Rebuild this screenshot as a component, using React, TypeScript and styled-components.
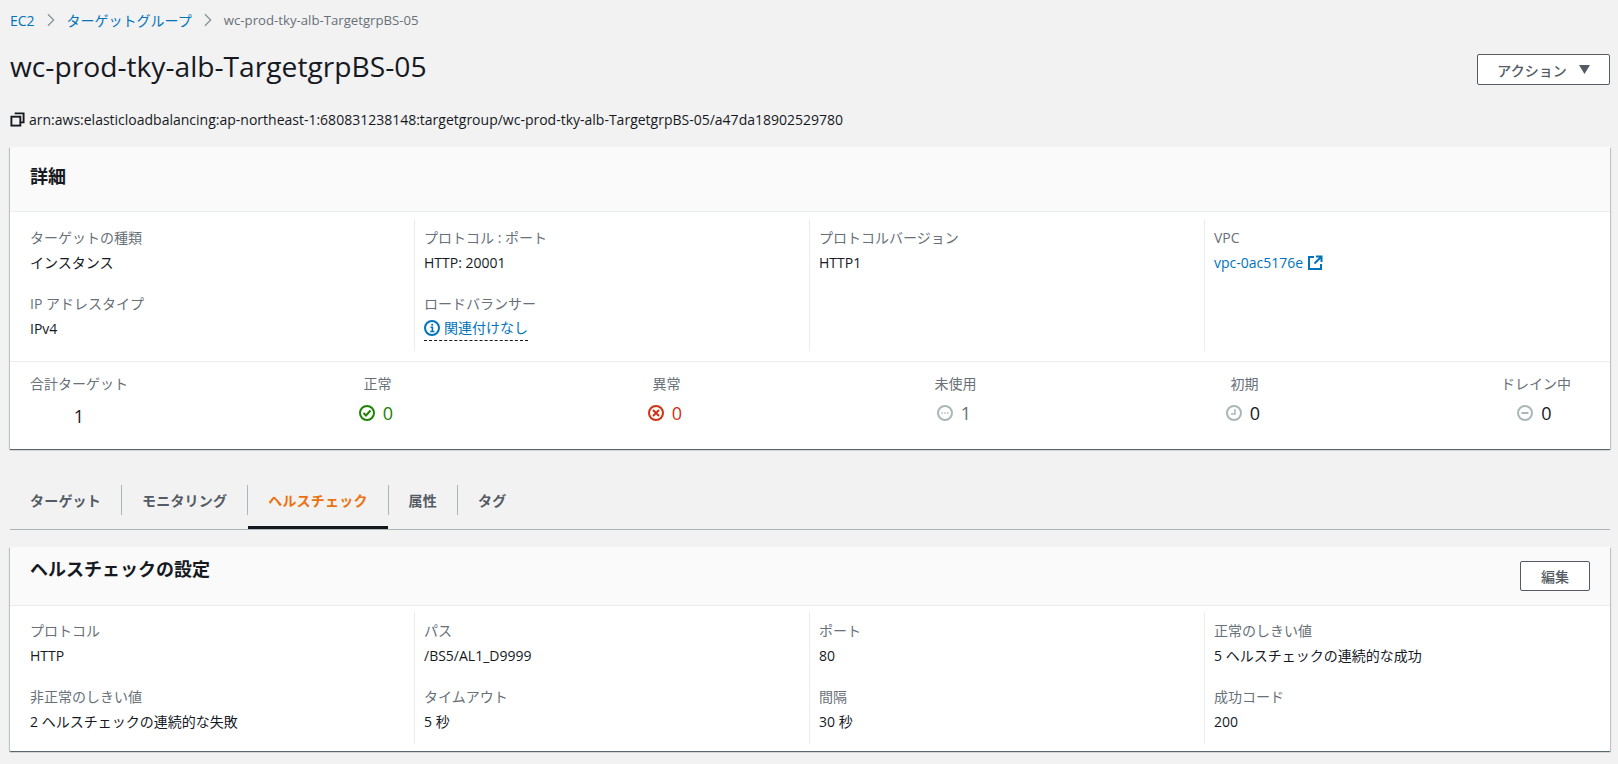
import React from "react";
import styled, { createGlobalStyle } from "styled-components";

const GlobalStyle = createGlobalStyle`
  html, body { margin: 0; padding: 0; background: #f2f2f2; }
  body {
    font-family: "Open Sans", "Noto Sans CJK JP", sans-serif;
    font-size: 14px;
    color: #16191f;
  }
`;

const Page = styled.div`
  width: 1618px;
  height: 764px;
  box-sizing: border-box;
  padding: 0 8px 0 10px;
  overflow: hidden;
`;

const Breadcrumbs = styled.nav`
  display: flex;
  align-items: center;
  height: 20px;
  margin-top: 10px;
  gap: 9px;
`;

const Crumb = styled.a`
  color: #0073bb;
  font-size: 14px;
`;

const CurrentCrumb = styled.span`
  color: #687078;
  font-size: 13.2px;
`;

const HeaderRow = styled.div`
  display: flex;
  justify-content: space-between;
  align-items: flex-start;
  margin-top: 17px;
`;

const Title = styled.h1`
  margin: 0;
  font-size: 28.2px;
  font-weight: 400;
  line-height: 38px;
`;

const Button = styled.button`
  box-sizing: border-box;
  display: flex;
  align-items: center;
  justify-content: center;
  gap: 12px;
  padding: 0;
  background: #fff;
  border: 1px solid #545b64;
  border-radius: 2px;
  color: #545b64;
  font-family: inherit;
  font-size: 14px;
  font-weight: 500;
`;

const ActionButton = styled(Button)`
  width: 133px;
  height: 31px;
  margin-top: 7px;
`;

const EditButton = styled(Button)`
  width: 70px;
  height: 30px;
  margin-top: 5px;
`;

const Arn = styled.div`
  display: flex;
  align-items: center;
  gap: 4px;
  margin-top: 24px;
  height: 20px;
  font-size: 14px;
`;

const Card = styled.section`
  background: #fff;
  box-shadow: 0 1px 1px 0 rgba(0, 28, 36, 0.5), 1px 1px 1px 0 rgba(0, 28, 36, 0.15),
    -1px 1px 1px 0 rgba(0, 28, 36, 0.15);
`;

const DetailsCard = styled(Card)`
  margin-top: 18px;
`;

const HealthCard = styled(Card)`
  margin-top: 17px;
`;

const CardHeader = styled.header<{ $h: number; $top: number }>`
  box-sizing: border-box;
  display: flex;
  justify-content: space-between;
  align-items: flex-start;
  height: ${(p) => p.$h}px;
  padding: ${(p) => p.$top}px 20px 0;
  background: #fafafa;
  border-bottom: 1px solid #eaeded;
`;

const CardTitle = styled.h2`
  margin: 0;
  font-size: 18px;
  font-weight: 700;
  line-height: 26px;
`;

const ColumnGrid = styled.div`
  display: grid;
  grid-template-columns: 384px 395px 395px 1fr;
  padding: 7px 20px 10px;
`;

const HealthGrid = styled(ColumnGrid)`
  padding: 6px 20px 7px;
`;

const Column = styled.div`
  padding: 0 10px 0 0;
  &:not(:first-child) {
    padding-left: 9px;
    border-left: 1px solid #eaeded;
  }
`;

const Field = styled.div`
  box-sizing: content-box;
  height: 50px;
  padding: 6px 0 10px;
`;

const Label = styled.div`
  color: #687078;
  font-size: 14px;
  line-height: 25px;
`;

const Value = styled.div`
  font-size: 14px;
  line-height: 25px;
  color: #16191f;
`;

const Link = styled.a`
  display: inline-flex;
  align-items: center;
  gap: 4px;
  color: #0073bb;
`;

const InfoLink = styled(Link)`
  border-bottom: 1px dashed #16191f;
  line-height: 24px;
`;

const Summary = styled.div`
  display: grid;
  grid-template-columns: 203px repeat(4, 289px) 1fr;
  height: 88px;
  box-sizing: border-box;
  padding: 9px 39px 0 20px;
  border-top: 1px solid #eaeded;
`;

const Stat = styled.div`
  text-align: center;
  &:first-child {
    justify-self: start;
  }
  &:last-child {
    justify-self: end;
  }
`;

const StatValue = styled.div<{ $color: string }>`
  display: flex;
  align-items: center;
  justify-content: center;
  gap: 8px;
  margin-top: 1px;
  padding-right: 3px;
  font-size: 18px;
  line-height: 32px;
  color: ${(p) => p.$color};
`;

const TotalValue = styled(StatValue)`
  margin-top: 4px;
  padding-right: 0;
`;

const Tabs = styled.div`
  display: flex;
  margin-top: 20px;
  height: 61px;
  box-sizing: border-box;
  padding-top: 16px;
  border-bottom: 1px solid #aab7b8;
`;

const Tab = styled.div<{ $active?: boolean }>`
  box-sizing: border-box;
  height: 44px;
  padding: 0 20px 14px;
  display: flex;
  align-items: center;
  font-weight: 700;
  font-size: 14px;
  letter-spacing: 0.2px;
  color: ${(p) => (p.$active ? "#ec7211" : "#545b64")};
  position: relative;
  ${(p) => p.$active && "box-shadow: inset 0 -3px 0 #16191f;"}
  &:not(:first-child) {
    margin-left: 1px;
  }
  &:not(:first-child)::before {
    content: "";
    position: absolute;
    left: -1px;
    top: 0;
    height: 30px;
    width: 1px;
    background: #aab7b8;
  }
`;

const Chevron = () => (
  <svg width="14" height="14" viewBox="0 0 16 16" fill="none" stroke="#879596" strokeWidth="1.5">
    <path d="M4.5 1.5 11 8l-6.5 6.5" />
  </svg>
);

const CopyIcon = () => (
  <svg width="15" height="15" viewBox="0 0 16 16" fill="none" stroke="#16191f" strokeWidth="2">
    <path d="M5 1.5h9.5V11H11" />
    <rect x="1.5" y="5" width="9.5" height="9.5" />
  </svg>
);

const Caret = () => (
  <svg width="11" height="9" viewBox="0 0 11 9" fill="#545b64">
    <path d="M0 0h11L5.5 9z" />
  </svg>
);

const External = () => (
  <svg width="16" height="16" viewBox="0 0 16 16" fill="none" stroke="#0073bb" strokeWidth="2">
    <path d="M7 2H2v12h12V9" />
    <path d="M9 1.5h5.5V7M14 2 7.5 8.5" />
  </svg>
);

const Info = () => (
  <svg width="16" height="16" viewBox="0 0 16 16" fill="none">
    <circle cx="8" cy="8" r="7" stroke="#0073bb" strokeWidth="2" />
    <path d="M6.5 7.2H8.4V11.5M6.2 11.5h4.2" stroke="#0073bb" strokeWidth="1.6" />
    <rect x="7.3" y="3.8" width="1.8" height="1.8" fill="#0073bb" />
  </svg>
);

type StatusKind = "ok" | "error" | "unused" | "initial" | "draining";

const StatusIcon = ({ kind, color }: { kind: StatusKind; color: string }) => (
  <svg width="16" height="16" viewBox="0 0 16 16" fill="none" stroke={color} strokeWidth="2">
    <circle cx="8" cy="8" r="7" />
    {kind === "ok" && <path d="M4.5 8 7 10.5 11.5 5.5" />}
    {kind === "error" && <path d="M5 5l6 6M11 5l-6 6" />}
    {kind === "unused" && <path d="M4.5 8h1.4M7.3 8h1.4M10.1 8h1.4" strokeWidth="1.4" />}
    {kind === "initial" && <path d="M9 4v5H5" strokeWidth="1.5" />}
    {kind === "draining" && <path d="M4.5 8h7" />}
  </svg>
);

const stats: { label: string; value: string; kind: StatusKind; icon: string; text: string }[] = [
  { label: "正常", value: "0", kind: "ok", icon: "#1d8102", text: "#1d8102" },
  { label: "異常", value: "0", kind: "error", icon: "#d13212", text: "#d13212" },
  { label: "未使用", value: "1", kind: "unused", icon: "#aab7b8", text: "#687078" },
  { label: "初期", value: "0", kind: "initial", icon: "#aab7b8", text: "#16191f" },
  { label: "ドレイン中", value: "0", kind: "draining", icon: "#aab7b8", text: "#16191f" },
];

const health = [
  [["プロトコル", "HTTP"], ["非正常のしきい値", "2 ヘルスチェックの連続的な失敗"]],
  [["パス", "/BS5/AL1_D9999"], ["タイムアウト", "5 秒"]],
  [["ポート", "80"], ["間隔", "30 秒"]],
  [["正常のしきい値", "5 ヘルスチェックの連続的な成功"], ["成功コード", "200"]],
];

export default function App() {
  return (
    <Page>
      <GlobalStyle />
      <Breadcrumbs>
        <Crumb>EC2</Crumb>
        <Chevron />
        <Crumb>ターゲットグループ</Crumb>
        <Chevron />
        <CurrentCrumb>wc-prod-tky-alb-TargetgrpBS-05</CurrentCrumb>
      </Breadcrumbs>

      <HeaderRow>
        <Title>wc-prod-tky-alb-TargetgrpBS-05</Title>
        <ActionButton>
          アクション <Caret />
        </ActionButton>
      </HeaderRow>

      <Arn>
        <CopyIcon />
        arn:aws:elasticloadbalancing:ap-northeast-1:680831238148:targetgroup/wc-prod-tky-alb-TargetgrpBS-05/a47da18902529780
      </Arn>

      <DetailsCard>
        <CardHeader $h={65} $top={16}>
          <CardTitle>詳細</CardTitle>
        </CardHeader>
        <ColumnGrid>
          <Column>
            <Field>
              <Label>ターゲットの種類</Label>
              <Value>インスタンス</Value>
            </Field>
            <Field>
              <Label>IP アドレスタイプ</Label>
              <Value>IPv4</Value>
            </Field>
          </Column>
          <Column>
            <Field>
              <Label>プロトコル : ポート</Label>
              <Value>HTTP: 20001</Value>
            </Field>
            <Field>
              <Label>ロードバランサー</Label>
              <Value>
                <InfoLink>
                  <Info />
                  関連付けなし
                </InfoLink>
              </Value>
            </Field>
          </Column>
          <Column>
            <Field>
              <Label>プロトコルバージョン</Label>
              <Value>HTTP1</Value>
            </Field>
          </Column>
          <Column>
            <Field>
              <Label>VPC</Label>
              <Value>
                <Link>
                  vpc-0ac5176e <External />
                </Link>
              </Value>
            </Field>
          </Column>
        </ColumnGrid>
        <Summary>
          <Stat>
            <Label>合計ターゲット</Label>
            <TotalValue $color="#16191f">1</TotalValue>
          </Stat>
          {stats.map((s) => (
            <Stat key={s.label}>
              <Label>{s.label}</Label>
              <StatValue $color={s.text}>
                <StatusIcon kind={s.kind} color={s.icon} />
                {s.value}
              </StatValue>
            </Stat>
          ))}
        </Summary>
      </DetailsCard>

      <Tabs>
        <Tab>ターゲット</Tab>
        <Tab>モニタリング</Tab>
        <Tab $active>ヘルスチェック</Tab>
        <Tab>属性</Tab>
        <Tab>タグ</Tab>
      </Tabs>

      <HealthCard>
        <CardHeader $h={59} $top={9}>
          <CardTitle>ヘルスチェックの設定</CardTitle>
          <EditButton>編集</EditButton>
        </CardHeader>
        <HealthGrid>
          {health.map((col, i) => (
            <Column key={i}>
              {col.map(([label, value]) => (
                <Field key={label}>
                  <Label>{label}</Label>
                  <Value>{value}</Value>
                </Field>
              ))}
            </Column>
          ))}
        </HealthGrid>
      </HealthCard>
    </Page>
  );
}
